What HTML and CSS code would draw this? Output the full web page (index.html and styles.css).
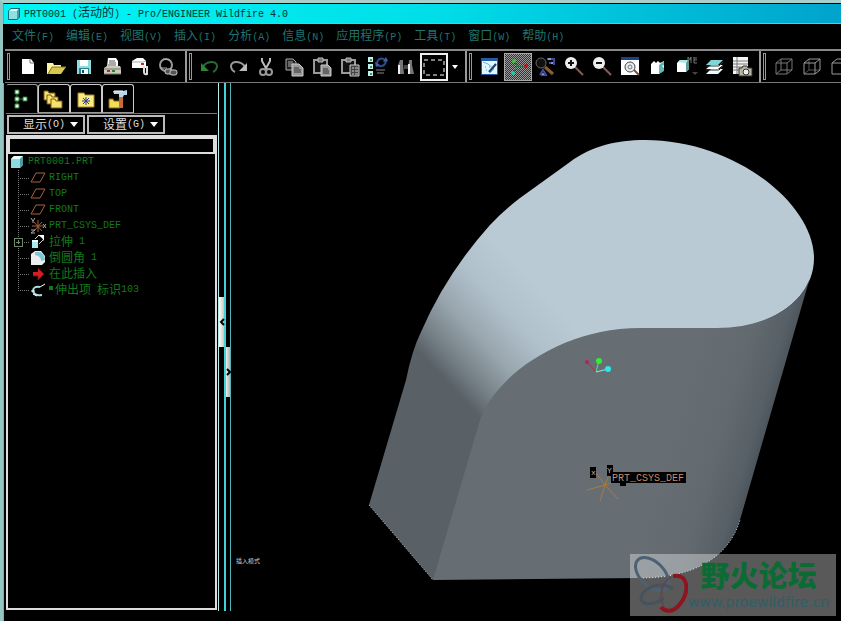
FILE: index.html
```html
<!DOCTYPE html>
<html lang="zh-CN">
<head>
  <meta charset="UTF-8" />
  <meta name="viewport" content="width=device-width, initial-scale=1.0"/>
  <title>PRT0001 - Pro/ENGINEER Wildfire 4.0</title>
  <link rel="stylesheet" href="styles.css">
</head>
<body>
  <div class="window">
    <header class="titlebar">
      <svg width="14" height="14" viewBox="0 0 14 14"><path d="M1 4l3-3h9v9l-3 3H1z" fill="#156b70"/><path d="M2 4h8v8H2z" fill="#8fe0e4"/><path d="M2 4l2-2h8l-2 2z" fill="#d8ffff"/><path d="M10 4l2-2v8l-2 2z" fill="#4b9da3"/></svg>
      <h1><span class="en">PRT0001 (</span>活动的<span class="en">) - Pro/ENGINEER Wildfire 4.0</span></h1>
    </header>

    <nav class="menubar">
      <button>文件<span class="en">(F)</span></button>
      <button>编辑<span class="en">(E)</span></button>
      <button>视图<span class="en">(V)</span></button>
      <button>插入<span class="en">(I)</span></button>
      <button>分析<span class="en">(A)</span></button>
      <button>信息<span class="en">(N)</span></button>
      <button>应用程序<span class="en">(P)</span></button>
      <button>工具<span class="en">(T)</span></button>
      <button>窗口<span class="en">(W)</span></button>
      <button>帮助<span class="en">(H)</span></button>
    </nav>

    <div class="toolbar">
      <div class="group">
        <i class="grip"></i>
        <button aria-label="新建"><svg viewBox="0 0 24 24"><path d="M6 4h9l3 4v11H6z" fill="#fff"/><path d="M14 4v4h4" fill="none" stroke="#777"/></svg></button>
        <button aria-label="打开"><svg viewBox="0 0 24 24"><path d="M3 8h6l1 2h7v3H8l-4 6H3z" fill="#fff6a0"/><path d="M8 12h14l-5 7H4z" fill="#d8c850"/><path d="M4 19l4-7h14" fill="none" stroke="#8a7a20"/></svg></button>
        <button aria-label="保存"><svg viewBox="0 0 24 24"><path d="M5 5h14v14H5z" fill="#8fdce0"/><path d="M8 5h8v6H8z" fill="#fff"/><path d="M7 13h10v6H7z" fill="#2b7f86"/><path d="M9 14h7v5H9z" fill="#e8ffff"/><path d="M10 15h2v3h-2z" fill="#246"/></svg></button>
        <button aria-label="打印"><svg viewBox="0 0 24 24"><path d="M8 3h8l2 3v6H7z" fill="#fff"/><path d="M9 6h6M9 8h7M8 10h8" stroke="#555"/><path d="M4 13l3-2h13l1 2v6H4z" fill="#c9c9bd"/><path d="M4 14h17M4 19h17" stroke="#777"/><path d="M7 16h3" stroke="#c22" stroke-width="2"/><path d="M12 16h3" stroke="#282" stroke-width="2"/></svg></button>
        <button aria-label="发送"><svg viewBox="0 0 24 24"><path d="M4 6l5-3h6l3 3v7H4z" fill="#fff"/><path d="M4 7h11l3-1" fill="none" stroke="#aaa"/><path d="M13 8h3v2h-3z" fill="#d21"/><path d="M16 11v6q0 3 3 2v-8" fill="none" stroke="#ddd" stroke-width="2"/></svg></button>
        <button aria-label="链接"><svg viewBox="0 0 24 24"><circle cx="10" cy="10" r="6" fill="none" stroke="#999" stroke-width="2"/><path d="M4 13h7M7 4l7 1" stroke="#aaa"/><rect x="9" y="14" width="7" height="5" rx="2" fill="#555" stroke="#ccc"/><rect x="14" y="15" width="7" height="5" rx="2" fill="#555" stroke="#ccc"/></svg></button>
      </div>
      <div class="group">
        <i class="grip"></i>
        <button aria-label="撤消"><svg viewBox="0 0 24 24"><path d="M5 12c3-6 14-7 14-1 0 3-2 5-4 6" fill="none" stroke="#286b30" stroke-width="2"/><path d="M3 8v8h8z" fill="#2c8537"/></svg></button>
        <button aria-label="重做"><svg viewBox="0 0 24 24"><path d="M19 12C16 6 5 5 5 11c0 3 2 5 4 6" fill="none" stroke="#999" stroke-width="2"/><path d="M21 8v8h-8z" fill="#bbb"/></svg></button>
        <button aria-label="剪切"><svg viewBox="0 0 24 24"><path d="M8 3v3l5 9M16 3v3l-5 9" fill="none" stroke="#bbb" stroke-width="2"/><circle cx="9" cy="17" r="3" fill="none" stroke="#999" stroke-width="2"/><circle cx="15" cy="17" r="3" fill="none" stroke="#999" stroke-width="2"/></svg></button>
        <button aria-label="复制"><svg viewBox="0 0 24 24"><path d="M4 4h7l3 3v8H4z" fill="#222" stroke="#aaa"/><path d="M6 7h5M6 9h6M6 11h6" stroke="#aaa"/><path d="M10 9h7l4 4v8H10z" fill="#999" stroke="#ccc"/><path d="M12 13h5M12 15h7M12 17h7" stroke="#333"/></svg></button>
        <button aria-label="粘贴"><svg viewBox="0 0 24 24"><path d="M4 5h13v13H4z" fill="#111" stroke="#999" stroke-width="2"/><path d="M8 3h5v4H8z" fill="#777" stroke="#bbb"/><path d="M11 10h7l3 3v8H11z" fill="#999" stroke="#ccc"/><path d="M13 14h5M13 16h6M13 18h6" stroke="#333"/></svg></button>
        <button aria-label="选择性粘贴"><svg viewBox="0 0 24 24"><path d="M4 5h13v13H4z" fill="#111" stroke="#999" stroke-width="2"/><path d="M8 3h5v4H8z" fill="#777" stroke="#bbb"/><path d="M12 10h9v11h-9z" fill="#444" stroke="#ccc"/><path d="M14 13h2m1 0h3M14 16h2m1 0h3M14 19h2m1 0h3" stroke="#ccc"/></svg></button>
        <button aria-label="再生"><svg viewBox="0 0 24 24"><path d="M2 2h5v5H2zM2 9h5v5H2zM2 16h5v5H2z" fill="#bff3e8"/><path d="M4 4h2v2H4zM4 11h2v2H4zM4 18h2v2H4z" fill="#3b8878"/><path d="M11 9c0-6 7-7 8-3M20 5c0 6-6 8-9 4" fill="none" stroke="#2c4c94" stroke-width="2"/><path d="M17 7l5-1-2-4zM9 7l5 3-4 2z" fill="#3c60b0"/><path d="M10 15h9M11 18h7" stroke="#888"/></svg></button>
        <button aria-label="查找"><svg viewBox="0 0 24 24"><path d="M6 5h3v4l1 10H4V10zM15 5h3v5l2 9h-6z" fill="#777"/><path d="M5 10v9M15 9v10" stroke="#eee" stroke-width="2"/><path d="M10 10h4v4h-4z" fill="#444"/></svg></button>
        <button class="boxed" aria-label="选取框"><svg viewBox="0 0 24 24"><path d="M2 5h20v15H2z" fill="none" stroke="#fff" stroke-dasharray="4 3"/></svg></button>
        <button class="drop" aria-label="更多"><svg viewBox="0 0 12 24"><path d="M3 10h6l-3 4z" fill="#fff"/></svg></button>
      </div>
      <div class="group">
        <i class="grip"></i>
        <button aria-label="重画"><svg viewBox="0 0 24 24"><path d="M3 3h17v17H3z" fill="#2459a6"/><path d="M4 6h15v13H4z" fill="#dff7ff"/><path d="M5 7l5 2 6 5-4 4" fill="none" stroke="#7ab4cc"/><path d="M11 17l7-8" stroke="#1c4068" stroke-width="2"/><path d="M7 12h1m3 0h1m-4 3h1" stroke="#4898b0"/></svg></button>
        <button class="pressed" aria-label="旋转中心"><svg viewBox="0 0 24 24"><path d="M8 6l3 5 9 1M11 11l-4 7" fill="none" stroke="#227a40"/><circle cx="8" cy="6" r="2" fill="#35c838"/><circle cx="20" cy="11" r="2" fill="#c51022"/><circle cx="7" cy="18" r="2" fill="#25c8b0"/></svg></button>
        <button aria-label="定向模式"><svg viewBox="0 0 24 24"><circle cx="7" cy="8" r="5" fill="#111" stroke="#666"/><path d="M11 12l8 7" stroke="#8a5d32" stroke-width="3"/><path d="M13 4h8M15 8h6M20 5v5M6 20l3-5 3 5M7 20h6" fill="none" stroke="#3f4c9c" stroke-width="2"/><path d="M14 4h3M17 8h2M8 19h2" stroke="#dde"/></svg></button>
        <button aria-label="放大"><svg viewBox="0 0 24 24"><path d="M13 12l8 8" stroke="#8d5a54" stroke-width="2"/><circle cx="9" cy="8" r="6" fill="#eee"/><path d="M9 5v6M6 8h6" stroke="#111" stroke-width="2"/></svg></button>
        <button aria-label="缩小"><svg viewBox="0 0 24 24"><path d="M13 12l8 8" stroke="#8d5a54" stroke-width="2"/><circle cx="9" cy="8" r="6" fill="#eee"/><path d="M6 8h6" stroke="#111" stroke-width="2"/></svg></button>
        <button aria-label="重新调整"><svg viewBox="0 0 24 24"><path d="M3 2h18v18H3z" fill="#fff"/><path d="M3 2h18v3H3z" fill="#1b3f8c"/><circle cx="12" cy="12" r="5" fill="#e8eef4" stroke="#444"/><circle cx="12" cy="12" r="2" fill="none" stroke="#777"/><path d="M16 15l5 5" stroke="#7d4c40" stroke-width="2"/></svg></button>
        <button aria-label="重定向"><svg viewBox="0 0 24 24"><path d="M5 9l3-3 2 2 2-2 2 2 4-2v9l-5 4H5z" fill="#fff"/><path d="M13 10l5-4v4l-2 1 2 2v3l-5 3z" fill="#61b9b5"/></svg></button>
        <button aria-label="视图列表"><svg viewBox="0 0 24 24"><path d="M3 8l3-3h9v9l-3 3H3z" fill="#fff"/><path d="M4 7l2-2h9l-3 3z" fill="#a8e8e4"/><path d="M12 8l3-3v9l-3 3z" fill="#5c9b98"/><path d="M14 8V2l2 3 1-3v6M20 3h3M20 5h3M20 8h3M20 2v6" fill="none" stroke="#777"/><path d="M18 17h6l-3 3z" fill="#444"/></svg></button>
        <button aria-label="层"><svg viewBox="0 0 24 24"><path d="M4 19l5-5h12l-5 5z" fill="#eaffff"/><path d="M4 14l5-4h12l-5 4z" fill="#fff"/><path d="M4 10l5-5h12l-5 5z" fill="#7fd6d6"/><path d="M4 15h13l4-4M4 11h13l4-4" fill="none" stroke="#333"/></svg></button>
        <button aria-label="视图管理器"><svg viewBox="0 0 24 24"><path d="M3 2h15v17H3z" fill="#f4f4f4"/><path d="M3 6h15M3 9h15M3 12h15M3 15h15M7 2v17" stroke="#777"/><path d="M9 13h3l1-2h4l1 2h4v8H9z" fill="#b8b8a4" stroke="#333"/><circle cx="16" cy="17" r="3" fill="#eee" stroke="#333"/></svg></button>
      </div>
      <div class="group">
        <i class="grip"></i>
        <button aria-label="线框"><svg viewBox="0 0 24 24"><path d="M4 8h11v11H4zM9 4h11v11H9zM4 8l5-4M15 8l5-4M4 19l5-4M15 19l5-4" fill="none" stroke="#777"/></svg></button>
        <button aria-label="隐藏线"><svg viewBox="0 0 24 24"><path d="M9 4v11h11M4 19l5-4" fill="none" stroke="#555"/><path d="M4 8h11v11H4zM4 8l5-4h11v11l-5 4M15 8l5-4" fill="none" stroke="#999"/></svg></button>
        <button aria-label="无隐藏线"><svg viewBox="0 0 24 24"><path d="M4 8h11v11H4zM4 8l5-4h11v11l-5 4M15 8l5-4" fill="none" stroke="#999"/></svg></button>
      </div>
    </div>

    <main class="workspace">
      <aside class="navigator">
        <div class="tabs">
          <button class="active" aria-label="模型树"><svg viewBox="0 0 24 24"><path d="M7 5v14M7 12h9" stroke="#3c7448" fill="none"/><path d="M5 3h4v4H5zM5 10h4v4H5zM5 17h4v4H5zM13 10h4v4h-4z" fill="#d8ffd8" stroke="#2b7b3b"/></svg></button>
          <button aria-label="文件夹浏览器"><svg viewBox="0 0 24 24"><g fill="#f5e070" stroke="#7a5c14"><path d="M2 4h4l1 2h6v7H2z"/><path d="M5 8h4l1 2h6v7H5z"/><path d="M9 12h4l1 2h6v7H9z"/></g></svg></button>
          <button aria-label="收藏夹"><svg viewBox="0 0 24 24"><path d="M4 6h6l1 2h9v12H4z" fill="#fbea80" stroke="#a8892c"/><path d="M12 10v8M8 14h8M9 11l6 6M15 11l-6 6" stroke="#263f8c"/></svg></button>
          <button aria-label="连接"><svg viewBox="0 0 24 24"><path d="M3 12h4l1 2h6v7H3z" fill="#f5dc58" stroke="#80641c"/><path d="M13 8h4v13h-4z" fill="#c76a3c"/><path d="M7 4h10l4-1v5h-3l-1 2h-4V7H8z" fill="#b9d7e8"/><path d="M8 4h9" stroke="#fff"/></svg></button>
        </div>
        <div class="tree-menus">
          <button>显示<span class="en">(O)</span><i class="arrow"></i></button>
          <button>设置<span class="en">(G)</span><i class="arrow"></i></button>
        </div>
        <div class="tree-panel">
          <input type="text" class="filter" aria-label="过滤">
          <div class="root">
            <svg width="14" height="14" viewBox="0 0 14 14"><path d="M1 4l3-3h9v9l-3 3H1z" fill="#8fdce0"/><path d="M1 4l3-3h9l-3 3z" fill="#e8ffff"/><path d="M10 4l3-3v9l-3 3z" fill="#4a9ca2"/></svg>
            <span class="en">PRT0001.PRT</span>
          </div>
          <ul class="tree">
            <li><svg class="branch" viewBox="0 0 18 16"><path d="M6 0v16M6 8h12"/></svg><svg class="node" viewBox="0 0 18 16"><path d="M1 12L6 3h9l-5 9z" fill="none" stroke="#a5623c"/></svg><span class="en">RIGHT</span></li>
            <li><svg class="branch" viewBox="0 0 18 16"><path d="M6 0v16M6 8h12"/></svg><svg class="node" viewBox="0 0 18 16"><path d="M1 12L6 3h9l-5 9z" fill="none" stroke="#a5623c"/></svg><span class="en">TOP</span></li>
            <li><svg class="branch" viewBox="0 0 18 16"><path d="M6 0v16M6 8h12"/></svg><svg class="node" viewBox="0 0 18 16"><path d="M1 12L6 3h9l-5 9z" fill="none" stroke="#a5623c"/></svg><span class="en">FRONT</span></li>
            <li><svg class="branch" viewBox="0 0 18 16"><path d="M6 0v16M6 8h12"/></svg><svg class="node" viewBox="0 0 18 16"><path d="M8 2v12M2 8h11M4 4l8 9M12 4l-8 9" stroke="#a5623c" fill="none"/><path d="M1 0l2 3 2-3M3 3v2M13 6l3 4M16 6l-3 4M1 12h4l-4 3h4" stroke="#aaa" fill="none"/></svg><span class="en">PRT_CSYS_DEF</span></li>
            <li><svg class="branch" viewBox="0 0 18 16"><path d="M6 0v16M6 8h12"/><path class="plus" d="M2 4h8v8H2zM4 8h4M6 6v4"/></svg><svg class="node" viewBox="0 0 18 16"><path d="M2 7h6v7H2z" fill="#a9e8ee"/><path d="M2 6h6v2H2z" fill="#e8ffff"/><path d="M5 5l4-4M9 10l5-5" stroke="#ccc"/><path d="M8 1h6v6l-2-3z" fill="#fff"/></svg>拉伸<span class="en"> 1</span></li>
            <li><svg class="branch" viewBox="0 0 18 16"><path d="M6 0v16M6 8h12"/></svg><svg class="node" viewBox="0 0 18 16"><path d="M1 4l4-3h6l4 5v6l-3 3H1z" fill="#eee"/><path d="M5 2h5q5 3 5 8l-4 1q0-5-6-6z" fill="#79c8d4"/></svg>倒圆角<span class="en"> 1</span></li>
            <li><svg class="branch" viewBox="0 0 18 16"><path d="M6 0v16M6 8h12"/></svg><svg class="node" viewBox="0 0 18 16"><path d="M3 6h5V2l6 6-6 6v-4H3z" fill="#d81c20"/><path d="M3 10h5v4l6-6" fill="none" stroke="#701010"/></svg>在此插入</li>
            <li><svg class="branch" viewBox="0 0 18 16"><path d="M6 0v8M6 8h12"/></svg><svg class="node" viewBox="0 0 18 16"><path d="M10 5q-7-1-7 4 1 5 9 4" fill="none" stroke="#a8dce4" stroke-width="2"/><path d="M10 5l5-3M1 9h4M3 12l4 2" stroke="#fff"/></svg><span class="mark"></span>伸出项<span class="en"> </span>标识<span class="en">103</span></li>
          </ul>
        </div>
      </aside>

      <div class="sash first">
        <button aria-label="收起"><svg viewBox="0 0 6 10"><path d="M5 2L2 5l3 3"/></svg></button>
      </div>
      <div class="sash second">
        <button aria-label="展开"><svg viewBox="0 0 6 10"><path d="M1 2l3 3-3 3"/></svg></button>
      </div>

      <section class="viewport">
        <svg class="model" viewBox="231 83 610 538" preserveAspectRatio="xMinYMin meet">
          <defs>
            <linearGradient id="round" gradientUnits="userSpaceOnUse" x1="546" y1="295" x2="449" y2="384">
              <stop offset="0" stop-color="#b9cad5"/>
              <stop offset=".3" stop-color="#b1c1cc"/>
              <stop offset=".6" stop-color="#98a5ad"/>
              <stop offset=".85" stop-color="#737d84"/>
              <stop offset="1" stop-color="#596167"/>
            </linearGradient>
            <linearGradient id="front" gradientUnits="userSpaceOnUse" x1="680" y1="400" x2="776" y2="428">
              <stop offset="0" stop-color="#666e74"/>
              <stop offset=".5" stop-color="#626a70"/>
              <stop offset=".8" stop-color="#576066"/>
              <stop offset="1" stop-color="#444d53"/>
            </linearGradient>
          </defs>
          <!-- rounded top and left side -->
          <path fill="url(#round)" d="M369 505L406 380Q412 350 421 332Q446 274 490 225Q503 211 520 198L570 162C592 146 616 140 645 140C735 140 814 204 814 258C814 300 770 329 717 329L640 329L484 422L435 580H433Z"/>
          <!-- front face -->
          <path fill="url(#front)" d="M433 580L480 420C494 378 560 328 640 328L717 328C765 328 803 306 811 274L740 520C728 560 690 578 640 578Z"/>
          <path d="M369 505l64 75M640 578C690 578 728 560 740 520" fill="none" stroke="#c8d2d8" stroke-dasharray="1 2"/>

          <g fill="none">
            <path d="M596 372l-9-10" stroke="#b82352"/>
            <path d="M596 372l3-11" stroke="#58e070"/>
            <path d="M596 372l12-3" stroke="#80f0ef"/>
          </g>
          <circle cx="587" cy="362" r="2" fill="#b82352"/>
          <circle cx="599" cy="361" r="3" fill="#32ee32"/>
          <circle cx="608" cy="369" r="3" fill="#2aeaea"/>

          <path d="M605 485l-18 5M605 485l-5 16M605 485l13 14M605 485l-9-12M605 485l5-13M605 485l12-4" fill="none" stroke="#a77b43"/>
          <path d="M590 467h6v11h-6zM607 465h6v11h-6zM620 480h6v6h-6zM611 472h75v11h-75z" fill="#000"/>
          <text class="axis" x="591" y="475">x</text>
          <text class="axis" x="607" y="473">Y</text>
          <text class="csys" x="612" y="481">PRT_CSYS_DEF</text>
          <text class="mode" x="236" y="563">插入模式</text>
        </svg>
        <a class="watermark" href="#">
          <svg viewBox="0 0 58 58">
            <g fill="none">
              <ellipse cx="22" cy="18" rx="12" ry="20" transform="rotate(-45 22 18)" stroke="#4c6274" stroke-width="3"/>
              <path d="M43 33C31 24 12 32 11 42c0 8 14 7 23 0" stroke="#46525c" stroke-width="3"/>
              <path d="M41 21c-9 5-12 18-8 28" stroke="#5c4a50" stroke-width="2"/>
              <path d="M43 20C60 17 59 38 50 48C44 56 36 57 31 51" stroke="#8e1520" stroke-width="4"/>
            </g>
          </svg>
          <span class="brand"><strong>野火论坛</strong><em>www.proewildfire.cn</em></span>
        </a>
      </section>
    </main>
  </div>
</body>
</html>
```

FILE: styles.css
```css
* {
  margin: 0;
  padding: 0;
  box-sizing: border-box;
}

body {
  background: #000;
  color: #ddd;
  font-family: "Liberation Serif", "Noto Sans CJK SC", sans-serif;
  font-size: 12px;
  line-height: 16px;
}

button {
  background: none;
  border: none;
  color: inherit;
  font: inherit;
  cursor: pointer;
}

svg {
  display: block;
  flex: none;
}

.en {
  font-family: "Liberation Mono", monospace;
  font-size: 10px;
  white-space: pre;
}

.window {
  min-height: 100vh;
  display: flex;
  flex-direction: column;
  border-top: 3px solid #a9cfca;
  border-left: 3px solid #93c6c3;
}

/* title and menus */
.titlebar {
  display: flex;
  align-items: center;
  gap: 3px;
  height: 21px;
  padding-left: 3px;
  border-top: 1px solid #000;
  border-left: 1px solid #0cc;
  border-bottom: 1px solid #8fb5b5;
  background: linear-gradient(90deg, #00f6f6, #00dfe9 50%, #00a3cc);
  color: #033;
}

.titlebar h1 {
  font-size: 12px;
  font-weight: normal;
}

.menubar {
  display: flex;
  gap: 12px;
  height: 25px;
  padding-left: 9px;
  align-items: center;
  color: #1f7470;
  white-space: nowrap;
}

/* toolbar */
.toolbar {
  display: flex;
  height: 34px;
  margin-left: 2px;
  border-top: 2px solid #888;
  border-bottom: 1px solid #777;
  overflow: hidden;
}

.group {
  display: flex;
  flex: none;
  align-items: center;
  padding: 0 3px 0 2px;
  border-right: 2px solid #999;
}

.group:last-child {
  border-right: none;
}

.grip {
  width: 3px;
  height: 27px;
  margin-right: 4px;
  border: 1px solid #999;
}

.group button {
  display: flex;
  align-items: center;
  justify-content: center;
  width: 28px;
  height: 28px;
}

.group svg {
  width: 24px;
  height: 24px;
}

.group .boxed {
  border: 2px solid #eee;
}

.group .pressed {
  background: repeating-conic-gradient(#999 0 25%, #333 0 50%) 0 0 / 2px 2px;
  border: 1px solid #aaa;
}

.group .drop {
  width: 14px;
}

.group .drop svg {
  width: 12px;
}

/* model tree */
.workspace {
  flex: 1;
  display: flex;
}

.navigator {
  flex: none;
  width: 215px;
  display: flex;
  flex-direction: column;
  padding: 1px 1px 11px 2px;
  border-left: 1px solid #3cc;
}

.tabs {
  display: flex;
  height: 29px;
}

.tabs button {
  width: 32px;
  display: flex;
  align-items: center;
  justify-content: center;
  border: 1px solid #ccc;
  border-bottom-color: #999;
  border-radius: 3px 3px 0 0;
}

.tabs .active {
  border-color: #999 #999 #000 #000;
}

.tabs svg {
  width: 24px;
  height: 24px;
}

.tree-menus {
  display: flex;
  gap: 2px;
  height: 21px;
  padding: 1px 0 0 1px;
  border-top: 1px solid #777;
}

.tree-menus button {
  display: flex;
  align-items: center;
  justify-content: flex-end;
  width: 78px;
  padding-right: 5px;
  border: 2px solid #bbb;
}

.tree-menus .en {
  margin-right: 5px;
}

.arrow {
  border: 4px solid transparent;
  border-top: 5px solid #fff;
  border-bottom: none;
}

.tree-panel {
  flex: 1;
  margin-top: 1px;
  border: 2px solid #ddd;
  color: #14781d;
}

.filter {
  display: block;
  width: 100%;
  height: 17px;
  background: #000;
  color: #ddd;
  border: 2px solid #ddd;
  outline: none;
}

.root {
  display: flex;
  align-items: center;
  gap: 4px;
  height: 16px;
  padding-left: 2px;
}

.tree {
  list-style: none;
}

.tree li {
  display: flex;
  align-items: center;
  height: 16px;
  padding-left: 4px;
  white-space: nowrap;
}

.branch {
  width: 18px;
  height: 16px;
  fill: none;
  stroke: #777;
  stroke-dasharray: 1 1;
  shape-rendering: crispEdges;
}

.branch .plus {
  fill: #000;
  stroke: #6a8a6a;
  stroke-dasharray: none;
}

.node {
  width: 18px;
  height: 16px;
  margin-right: 1px;
}

.mark {
  width: 4px;
  height: 4px;
  margin: 0 2px 4px 0;
  background: #14781d;
}

/* sashes between tree and graphics */
.sash {
  flex: none;
  margin-bottom: 10px;
}

.sash button {
  display: flex;
  align-items: center;
  width: 100%;
  height: 50px;
}

.sash svg {
  width: 6px;
  height: 10px;
  fill: none;
  stroke: #000;
  stroke-width: 2;
}

.first {
  width: 8px;
  padding-top: 214px;
  border-left: 1px solid #b6eeee;
  border-right: 2px solid #3fd4dc;
}

.first button {
  background: linear-gradient(90deg, #fff, #c8c8b8);
}

.second {
  width: 5px;
  padding-top: 264px;
  border-right: 1px solid #4fb4bc;
}

.second button {
  background: linear-gradient(90deg, #e4f0ea, #b8b0a4);
}

/* graphics area */
.viewport {
  position: relative;
  flex: 1;
  min-width: 0;
  overflow: hidden;
}

.model {
  width: 100%;
}

.csys,
.axis {
  font-family: "Liberation Mono", monospace;
  font-size: 10px;
  fill: #c48c66;
}

.axis {
  font-size: 8px;
  fill: #ccb89c;
}

.mode {
  font-family: "Noto Sans CJK SC", sans-serif;
  font-size: 6px;
  fill: #ccc;
}

.watermark {
  position: absolute;
  right: 5px;
  bottom: 5px;
  display: flex;
  align-items: center;
  width: 206px;
  height: 62px;
  background: rgba(255, 255, 255, 0.35);
  text-decoration: none;
}

.watermark svg {
  width: 58px;
  height: 58px;
}

.brand {
  display: flex;
  flex-direction: column;
  align-items: center;
}

.brand strong {
  color: #0b6b34;
  font-family: "Noto Sans CJK SC", sans-serif;
  font-size: 29px;
  font-weight: 900;
  line-height: 34px;
}

.brand em {
  color: #2f5f68;
  font-family: "DejaVu Sans", sans-serif;
  font-size: 14px;
  font-style: normal;
  line-height: 22px;
}
```
